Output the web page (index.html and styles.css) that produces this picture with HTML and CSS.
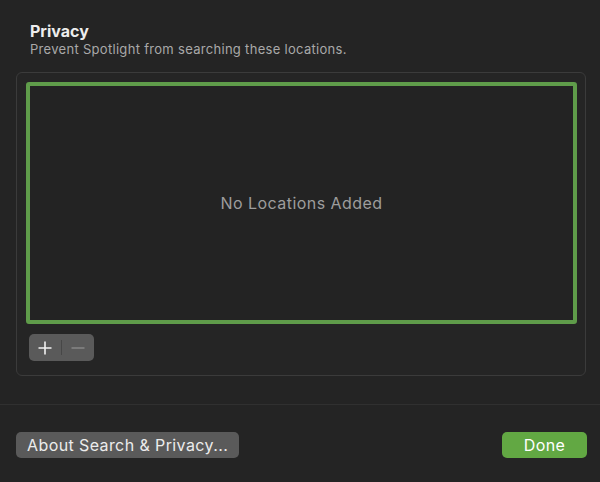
FILE: index.html
```html
<!DOCTYPE html>
<html lang="en">
<head>
  <meta charset="UTF-8">
  <title>Spotlight Privacy</title>
  <link rel="stylesheet" href="styles.css">
</head>
<body>
  <header class="intro">
    <h1>Privacy</h1>
    <p>Prevent Spotlight from searching these locations.</p>
  </header>

  <section class="panel">
    <div class="locations">No Locations Added</div>
    <div class="segmented">
      <button class="seg add">
        <svg width="14" height="14" viewBox="0 0 14 14"><path d="M7 0.5v13M0.5 7h13" stroke="#f2f2f2" stroke-width="1.6"/></svg>
      </button>
      <span class="seg-divider"></span>
      <button class="seg remove">
        <svg width="14" height="14" viewBox="0 0 14 14"><path d="M0.5 7h13" stroke="#8a8a8a" stroke-width="1.4"/></svg>
      </button>
    </div>
  </section>

  <hr class="separator">

  <footer class="actions">
    <button class="btn">About Search &amp; Privacy...</button>
    <button class="btn primary">Done</button>
  </footer>
</body>
</html>
```

FILE: styles.css
```css
body {
  margin: 0;
  background-color: #242424;
  color: #e6e6e6;
  font-family: Inter, 'Liberation Sans', sans-serif;
  width: 600px;
  height: 482px;
  overflow: hidden;
}

.intro {
  padding: 21px 30px 0;
  height: 72px;
  box-sizing: border-box;
}

.intro h1 {
  margin: 0;
  font-size: 16px;
  line-height: 21px;
  font-weight: 700;
  color: #ededed;
}

.intro p {
  margin: 0;
  font-size: 13px;
  line-height: 15px;
  letter-spacing: 0.3px;
  color: #a9a9a9;
}

.panel {
  margin: 0 0 0 16px;
  width: 570px;
  height: 304px;
  box-sizing: border-box;
  border: 1px solid #3b3b3b;
  border-radius: 6px;
  background-color: #252525;
  padding: 9px 8px 0 9px;
}

.locations {
  height: 242px;
  box-sizing: border-box;
  border: 4px solid #5f9c4a;
  border-radius: 3px;
  background-color: #232323;
  display: flex;
  align-items: center;
  justify-content: center;
  font-size: 16px;
  letter-spacing: 0.45px;
  color: #9d9d9d;
}

.segmented {
  display: flex;
  align-items: center;
  width: 65px;
  height: 27px;
  margin: 10px 0 0 3px;
  background-color: #5a5a5a;
  border-radius: 5px;
}

.seg {
  flex: 1;
  height: 100%;
  border: none;
  background: none;
  padding: 0;
  display: flex;
  align-items: center;
  justify-content: center;
}

.seg-divider {
  width: 1px;
  height: 15px;
  background-color: #474747;
}

.separator {
  margin: 28px 0 0;
  border: none;
  border-top: 1px solid #303030;
}

.actions {
  display: flex;
  justify-content: space-between;
  padding: 27px 13px 0 16px;
}

.btn {
  height: 26px;
  padding: 0 11px;
  border: none;
  border-radius: 5px;
  background-color: #5a5a5a;
  color: #ececec;
  font-family: Inter, 'Liberation Sans', sans-serif;
  font-size: 16px;
  letter-spacing: 0.4px;
}

.btn.primary {
  width: 85px;
  background-color: #62a843;
  color: #ffffff;
}
```
